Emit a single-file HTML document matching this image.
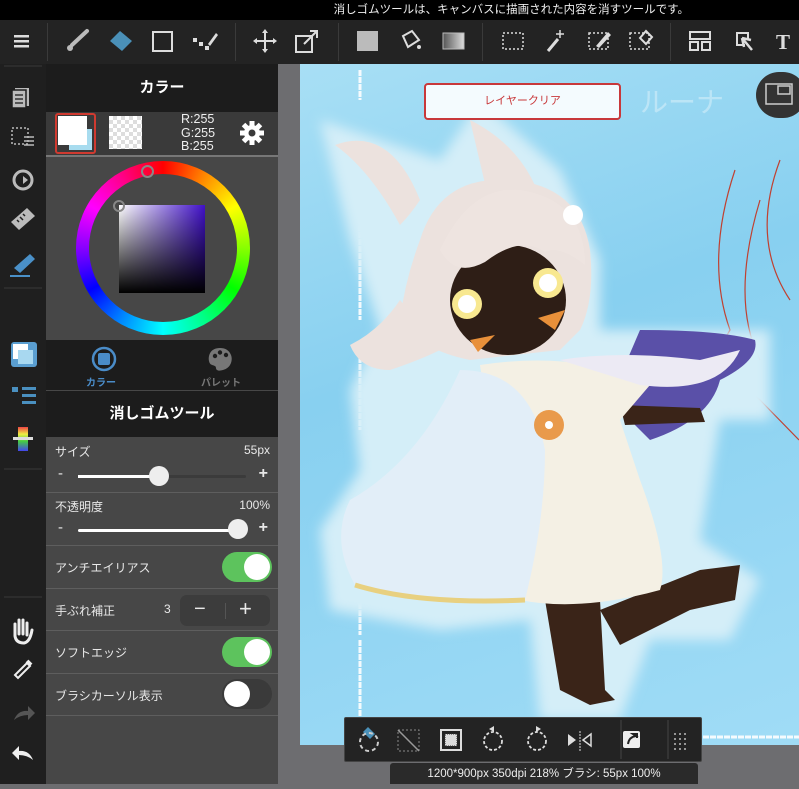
<!DOCTYPE html>
<html><head><meta charset="utf-8"><style>
*{margin:0;padding:0;box-sizing:border-box}
body{width:799px;height:784px;overflow:hidden;background:#6d6d70;font-family:"Liberation Sans","Noto Sans CJK JP",sans-serif;position:relative;color:#fff}
.abs{position:absolute}
#status{left:0;top:0;width:799px;height:20px;background:#000;font-size:11.5px;color:#eee;text-align:right;padding-right:110px;line-height:21px}
#tb{left:0;top:20px;width:799px;height:44px;background:#232323}
.sep{position:absolute;top:3px;width:1px;height:38px;background:#3a3a3a}
#rail{left:0;top:64px;width:46px;height:720px;background:#1f1f1f}
#panel{left:46px;top:64px;width:232px;height:720px;background:#474747}
.hdr{position:absolute;left:0;width:232px;background:#1c1c1c;text-align:center;font-weight:bold;font-size:15px}
.row{position:absolute;left:0;width:232px;border-top:1.5px solid #5e5e5e;font-size:12px;color:#e8e8e8}
.tog{position:absolute;right:6px;width:50px;height:30px;border-radius:15px;background:#5dc35d}
.tog::after{content:"";position:absolute;right:2px;top:2px;width:26px;height:26px;border-radius:50%;background:#fff}
.tog.off{background:#3a3a3a}.tog.off::after{left:2px;right:auto}
.track{position:absolute;left:32px;width:168px;height:3px;background:#3b3b3b;border-radius:2px}
.knob{position:absolute;width:20px;height:20px;border-radius:50%;background:#eee}
</style></head><body>
<div id="status" class="abs">消しゴムツールは、キャンバスに描画された内容を消すツールです。</div>
<div id="tb" class="abs">
<svg width="799" height="44" viewBox="0 20 799 44" style="position:absolute;left:0;top:0">
<g fill="#ddd"><rect x="14" y="35" width="15" height="2.5"/><rect x="14" y="40" width="15" height="2.5"/><rect x="14" y="45" width="15" height="2.5"/></g>
<path d="M87 31 L72 45" stroke="#bbb" stroke-width="4" stroke-linecap="round"/><circle cx="70" cy="48" r="3" fill="#bbb"/>
<path d="M120 31 L132 41 L122 51 L110 41Z" fill="#4a90b8"/>
<rect x="153" y="32" width="19" height="19" fill="none" stroke="#ddd" stroke-width="2"/>
<g fill="#ddd"><rect x="193" y="38" width="4" height="4"/><rect x="199" y="42" width="4" height="4"/><rect x="205" y="46" width="4" height="4"/><path d="M208 44 L216 33 L218 35 L210 46Z"/></g>
<path d="M265 31 V51 M255 41 H275" stroke="#ddd" stroke-width="2"/><path d="M265 29 l-3 4 h6z M265 53 l-3-4 h6z M253 41 l4-3 v6z M277 41 l-4-3 v6z" fill="#ddd"/>
<rect x="296" y="36" width="16" height="16" fill="none" stroke="#ddd" stroke-width="2"/><path d="M304 44 L317 31 M310 31 H317 V38" stroke="#ddd" stroke-width="2" fill="none"/>
<rect x="357" y="31" width="21" height="20" fill="#bbb"/>
<path d="M403 36 L412 31 L419 40 L408 47Z" fill="none" stroke="#ddd" stroke-width="2"/><circle cx="419" cy="47" r="2" fill="#ddd"/>
<defs><linearGradient id="g1"><stop offset="0" stop-color="#555"/><stop offset="1" stop-color="#ddd"/></linearGradient></defs>
<rect x="443" y="33" width="21" height="16" fill="url(#g1)" stroke="#bbb"/>
<rect x="503" y="33" width="20" height="16" fill="none" stroke="#ddd" stroke-width="1.5" stroke-dasharray="2 2"/>
<path d="M548 51 L558 39" stroke="#ddd" stroke-width="3"/><path d="M560 30 v8 M556 34 h8" stroke="#ddd" stroke-width="1.5"/>
<rect x="589" y="33" width="19" height="16" fill="none" stroke="#ddd" stroke-width="1.5" stroke-dasharray="2 2"/><path d="M596 46 L608 32 L611 35 L599 48Z" fill="#ddd"/>
<rect x="630" y="33" width="19" height="16" fill="none" stroke="#ddd" stroke-width="1.5" stroke-dasharray="2 2"/><path d="M640 38 L646 31 L652 37 L646 44Z" fill="none" stroke="#ddd" stroke-width="2"/>
<rect x="690" y="32" width="20" height="7" fill="none" stroke="#ddd" stroke-width="2"/><rect x="690" y="42" width="8" height="8" fill="none" stroke="#ddd" stroke-width="2"/><rect x="702" y="42" width="8" height="8" fill="none" stroke="#ddd" stroke-width="2"/>
<path d="M745 45 H737 V33 H748 V40" fill="none" stroke="#ddd" stroke-width="2"/><path d="M742 38 L752 50 M742 38 L751 40 M742 38 L744 47" stroke="#ddd" stroke-width="2.5"/>
<text x="776" y="49" font-family="Liberation Serif" font-weight="bold" font-size="21" fill="#ddd">T</text>
</svg>
<div class="sep" style="left:47px"></div><div class="sep" style="left:235px"></div><div class="sep" style="left:338px"></div><div class="sep" style="left:482px"></div><div class="sep" style="left:670px"></div>
</div>
<div id="rail" class="abs">
<svg width="46" height="720" viewBox="0 64 46 720">
<line x1="4" y1="66" x2="42" y2="66" stroke="#3a3a3a"/>
<rect x="15" y="88" width="14" height="18" fill="#bbb"/><rect x="12" y="90" width="14" height="18" fill="#bbb" stroke="#1f1f1f" stroke-width="1.5"/><path d="M15 95h8M15 99h8M15 103h8" stroke="#333" stroke-width="1.5"/>
<rect x="12" y="128" width="16" height="16" fill="none" stroke="#bbb" stroke-width="1.5" stroke-dasharray="2 2"/><path d="M24 137h10M24 141h10M24 145h10" stroke="#bbb" stroke-width="1.5"/>
<circle cx="23" cy="180" r="9" fill="none" stroke="#bbb" stroke-width="3"/><path d="M23 176 l5 4 -5 4z" fill="#bbb"/>
<path d="M11 222 L27 208 L35 216 L19 230Z" fill="#bbb"/><path d="M17 220 l2 2 M20 217 l3 3 M23 214 l2 2" stroke="#1f1f1f" stroke-width="1.5"/>
<path d="M14 268 L30 254 L35 259 L20 273Z" fill="#4a90c8"/><path d="M10 276 h20" stroke="#4a90c8" stroke-width="2"/>
<line x1="4" y1="288" x2="42" y2="288" stroke="#3a3a3a"/>
<rect x="11" y="342" width="26" height="25" rx="3" fill="#5a9ed0"/><rect x="13" y="344" width="15" height="15" fill="#fff"/><rect x="18" y="350" width="15" height="14" fill="#a8d8f0"/>
<g fill="#4a90c0"><rect x="12" y="387" width="6" height="5"/><rect x="22" y="387" width="14" height="3"/><rect x="22" y="394" width="14" height="3"/><rect x="22" y="401" width="14" height="3"/></g>
<defs><linearGradient id="rb" x1="0" y1="0" x2="0" y2="1"><stop offset="0" stop-color="#e44"/><stop offset=".3" stop-color="#ee4"/><stop offset=".6" stop-color="#4c4"/><stop offset="1" stop-color="#44e"/></linearGradient></defs>
<rect x="18" y="427" width="10" height="24" fill="url(#rb)"/><rect x="13" y="437" width="20" height="3" fill="#ddd"/>
<line x1="4" y1="469" x2="42" y2="469" stroke="#3a3a3a"/>
<line x1="4" y1="597" x2="42" y2="597" stroke="#3a3a3a"/>
<path d="M15 636 V624 M19 634 V620 M23 634 V620 M27 635 V623 M15 636 Q16 643 24 643 Q30 642 32 630" stroke="#eee" stroke-width="3" fill="none" stroke-linecap="round"/>
<path d="M15 675 L27 663 L30 666 L18 678Z" fill="none" stroke="#eee" stroke-width="2"/><path d="M27 661 l4 4" stroke="#eee" stroke-width="4"/>
<path d="M14 720 Q18 710 28 711 V706 L35 713 L28 720 V715 Q20 715 14 720Z" fill="#555"/>
<path d="M33 760 Q29 750 19 751 V746 L12 753 L19 760 V755 Q27 755 33 760Z" fill="#eee"/>
</svg>
</div>
<div id="panel" class="abs">
<div class="hdr" style="top:0;height:48px;line-height:48px">カラー</div>
<div class="abs" style="left:0;top:48px;width:232px;height:43px;background:#3a3a3a">
 <div class="abs" style="left:9px;top:1px;width:41px;height:41px;border:2px solid #d03a30;border-radius:3px"></div>
 <div class="abs" style="left:23px;top:17px;width:23px;height:21px;background:#a8dcef"></div>
 <div class="abs" style="left:12px;top:4px;width:29px;height:29px;background:#fff"></div>
 <div class="abs" style="left:63px;top:4px;width:33px;height:33px;background:repeating-conic-gradient(#ddd 0 25%,#fff 0 50%) 0 0/8px 8px"></div>
 <div class="abs" style="left:135px;top:1px;font-size:12.5px;line-height:13.5px;color:#eee">R:255<br>G:255<br>B:255</div>
 <svg class="abs" style="left:193px;top:8px" width="26" height="26" viewBox="0 0 26 26"><g fill="#fff" transform="translate(13 13)"><circle r="8"/><g id="t"><rect x="-2.5" y="-12" width="5" height="6"/></g><use href="#t" transform="rotate(45)"/><use href="#t" transform="rotate(90)"/><use href="#t" transform="rotate(135)"/><use href="#t" transform="rotate(180)"/><use href="#t" transform="rotate(225)"/><use href="#t" transform="rotate(270)"/><use href="#t" transform="rotate(315)"/></g><circle cx="13" cy="13" r="3.5" fill="#3a3a3a"/></svg>
</div>
<div class="abs" style="left:0;top:91px;width:232px;height:1.5px;background:#777"></div>
<div class="abs" style="left:30px;top:97px;width:174px;height:174px;border-radius:50%;background:conic-gradient(from 0deg,#0ff,#08f,#00f,#80f,#f0f,#f08,#f00,#f80,#ff0,#8f0,#0f0,#0f8,#0ff);transform:rotate(180deg)"></div>
<div class="abs" style="left:43px;top:110px;width:148px;height:148px;border-radius:50%;background:#474747"></div>
<div class="abs" style="left:73px;top:141px;width:86px;height:88px;background:linear-gradient(to bottom,transparent,#000),linear-gradient(to right,#fff,#4010c8)"></div>
<div class="abs" style="left:95px;top:101px;width:13px;height:13px;border-radius:50%;border:2px solid #888"></div>
<div class="abs" style="left:67px;top:136px;width:12px;height:12px;border-radius:50%;border:2px solid #888"></div>
<div class="abs" style="left:0;top:276px;width:232px;height:50px;background:#1c1c1c">
 <svg class="abs" style="left:45px;top:6px" width="26" height="26"><circle cx="13" cy="13" r="11" fill="none" stroke="#4a8cc8" stroke-width="2.5"/><rect x="7" y="7" width="12" height="12" rx="2" fill="#4a8cc8"/></svg>
 <div class="abs" style="left:40px;top:34px;font-size:10px;color:#4a8cc8;font-weight:bold">カラー</div>
 <svg class="abs" style="left:161px;top:6px" width="26" height="26"><path d="M13 2 C3 2 1 10 2 15 C3 21 9 18 9 22 C9 25 13 25 16 24 C24 22 26 14 24 9 C22 4 18 2 13 2Z" fill="#777"/><circle cx="8" cy="10" r="2.2" fill="#1c1c1c"/><circle cx="13" cy="6.5" r="2.2" fill="#1c1c1c"/><circle cx="19" cy="9" r="2.2" fill="#1c1c1c"/></svg>
 <div class="abs" style="left:155px;top:34px;font-size:10px;color:#777;font-weight:bold">パレット</div>
</div>
<div class="hdr" style="top:327px;height:46px;line-height:46px">消しゴムツール</div>
<div class="row" style="top:373px;height:55px;border-top:none">
 <div class="abs" style="left:9px;top:6px">サイズ</div><div class="abs" style="right:8px;top:6px">55px</div>
 <div class="abs" style="left:12px;top:28px;font-size:15px">-</div><div class="abs" style="right:10px;top:28px;font-size:16px;font-weight:bold">+</div>
 <div class="track" style="top:38px"><div class="abs" style="left:0;top:0;width:80px;height:3px;background:#fff"></div></div>
 <div class="knob" style="left:103px;top:29px"></div>
</div>
<div class="row" style="top:428px;height:53px">
 <div class="abs" style="left:9px;top:5px">不透明度</div><div class="abs" style="right:8px;top:5px">100%</div>
 <div class="abs" style="left:12px;top:26px;font-size:15px">-</div><div class="abs" style="right:10px;top:26px;font-size:16px;font-weight:bold">+</div>
 <div class="track" style="top:36px;background:#fff"></div>
 <div class="knob" style="left:182px;top:26px"></div>
</div>
<div class="row" style="top:481px;height:43px"><div class="abs" style="left:9px;top:13px">アンチエイリアス</div><div class="tog" style="top:6px"></div></div>
<div class="row" style="top:524px;height:42px"><div class="abs" style="left:9px;top:13px">手ぶれ補正</div><div class="abs" style="left:118px;top:13px">3</div>
 <div class="abs" style="left:134px;top:6px;width:90px;height:31px;border-radius:7px;background:#3c3c3c"><div class="abs" style="left:14px;top:3px;font-size:20px">−</div><div class="abs" style="left:45px;top:8px;width:1px;height:16px;background:#555"></div><div class="abs" style="left:59px;top:1px;font-size:22px">+</div></div></div>
<div class="row" style="top:566px;height:43px"><div class="abs" style="left:9px;top:13px">ソフトエッジ</div><div class="tog" style="top:6px"></div></div>
<div class="row" style="top:609px;height:42px"><div class="abs" style="left:9px;top:13px">ブラシカーソル表示</div><div class="tog off" style="top:5px"></div></div>
<div class="row" style="top:651px;height:70px"></div>
</div>
<div class="abs" style="left:278px;top:64px;width:22px;height:720px;background:#6d6d70"></div>
<div class="abs" style="left:300px;top:64px;width:499px;height:681px;background:linear-gradient(160deg,#a8dff5,#88d0f0 40%,#a0dcf6)"></div>
<svg class="abs" style="left:300px;top:64px" width="499" height="681" viewBox="300 64 499 681">
<defs><filter id="bl" x="-20%" y="-20%" width="140%" height="140%"><feGaussianBlur stdDeviation="6"/></filter></defs>
<path d="M360 70v30M360 190v130M360 350v80M361 505v40M360 575v60M360 640v100M360 737H530M640 737H799" stroke="#fff" stroke-width="3" opacity=".9" stroke-dasharray="6 1"/>
<path d="M735 170 Q705 260 730 330 Q710 360 760 400 L799 440 M760 200 Q730 300 760 360 M780 160 Q750 240 790 300" stroke="#c04030" stroke-width="1.2" fill="none"/>
<text x="640" y="112" font-size="28" fill="#fff" opacity=".35">ルーナ</text>
<g filter="url(#bl)" fill="#d4eef8">
<path d="M320 120 L440 160 L480 100 L560 170 L600 260 L600 330 L770 330 L770 420 L720 420 L700 540 L760 580 L730 640 L650 640 L620 720 L540 720 L530 620 L440 630 L330 610 L320 530 L360 470 L350 390 L380 330 L350 240Z"/>
</g>
<path d="M640 330 Q720 330 755 340 Q760 360 720 380 Q710 420 650 440 L610 400Z" fill="#5a50a8"/>
<path d="M600 610 L700 570 L740 565 L735 600 L690 610 L620 645Z" fill="#3a2418"/>
<path d="M545 600 L600 600 L605 690 L615 700 L590 705 L560 690Z" fill="#3a2418"/>
<path d="M620 405 L700 408 L705 422 L625 425Z" fill="#3a2418"/>
<path d="M480 365 Q580 350 650 385 L620 420 L640 480 Q670 560 660 590 Q580 612 520 600 Q500 500 480 365Z" fill="#f4f0e4"/>
<path d="M460 370 Q530 370 545 450 Q545 520 525 600 Q420 605 355 585 Q330 540 350 500 Q420 460 460 370Z" fill="#e2eef8"/>
<path d="M355 585 Q420 605 525 600" stroke="#e8d080" stroke-width="5" fill="none"/>
<path d="M560 360 Q620 350 700 360 L740 350 Q720 395 640 385Z" fill="#eceaf4"/>
<path d="M335 145 Q390 125 420 200 Q410 215 400 225 Q370 170 335 145Z" fill="#ece2de"/>
<path d="M470 120 Q530 150 545 215 L490 205Z" fill="#ece2de"/>
<path d="M420 240 Q440 175 510 180 Q580 185 590 250 Q595 300 580 330 L560 350 L470 360 Q420 350 400 320 Q405 280 420 240Z" fill="#ece2de"/>
<path d="M400 300 Q380 330 350 345 Q360 370 390 370 Q420 360 440 350Z" fill="#ece2de"/>
<ellipse cx="508" cy="300" rx="58" ry="55" fill="#2e1e16"/>
<path d="M440 250 Q470 185 520 190 Q585 200 585 265 Q560 245 545 252 Q520 235 485 262 Q455 278 440 250Z" fill="#eee4e0"/>
<circle cx="467" cy="304" r="15" fill="#f8e890"/><circle cx="467" cy="304" r="9" fill="#fff"/>
<circle cx="548" cy="283" r="15" fill="#f8e890"/><circle cx="548" cy="283" r="9" fill="#fff"/>
<path d="M470 340 L495 335 L478 352Z M538 318 L565 310 L555 330Z" fill="#e8903a"/>
<circle cx="573" cy="215" r="10" fill="#fff"/>
<circle cx="549" cy="425" r="15" fill="#e8903a" opacity=".9"/><circle cx="549" cy="425" r="4" fill="#fff"/>
</svg>
<div class="abs" style="left:424px;top:83px;width:197px;height:37px;border:2px solid #c8383a;border-radius:4px;background:#f4fbfe;color:#c8383a;font-size:11px;text-align:center;line-height:33px">レイヤークリア</div>
<div class="abs" style="left:756px;top:72px;width:50px;height:46px;border-radius:23px;background:#333"><svg width="30" height="24" style="position:absolute;left:9px;top:11px"><rect x="1" y="1" width="26" height="20" fill="none" stroke="#ccc" stroke-width="1.5"/><rect x="13" y="3" width="12" height="8" fill="none" stroke="#ccc" stroke-width="1.5"/></svg></div>
<div class="abs" style="left:344px;top:717px;width:358px;height:45px;background:#232323;border:1px solid #444;border-radius:2px">
<svg width="358" height="45" viewBox="344 717 358 45" style="position:absolute;left:-1px;top:-1px">
<path d="M363 732 L368 727 L375 734 L370 739Z" fill="#4a90b8"/><circle cx="369" cy="742" r="9" fill="none" stroke="#ccc" stroke-width="2" stroke-dasharray="4 3"/>
<rect x="398" y="730" width="21" height="21" fill="none" stroke="#888" stroke-dasharray="2 2"/><path d="M398 730 L419 751" stroke="#999" stroke-width="1.5"/>
<rect x="441" y="730" width="20" height="20" fill="none" stroke="#ddd" stroke-width="2"/><rect x="445" y="734" width="12" height="12" fill="#ddd" stroke="#333" stroke-dasharray="1 1"/>
<circle cx="493" cy="741" r="9" fill="none" stroke="#ddd" stroke-width="1.8" stroke-dasharray="3 2"/><path d="M489 729 l5 -3 v6z" fill="#ddd"/>
<circle cx="537" cy="741" r="9" fill="none" stroke="#ddd" stroke-width="1.8" stroke-dasharray="3 2"/><path d="M541 729 l-5 -3 v6z" fill="#ddd"/>
<path d="M568 734 v12 l8-6z" fill="#ddd"/><path d="M591 734 v12 l-8-6z" fill="none" stroke="#ddd" stroke-width="1.5"/><path d="M580 731 v20" stroke="#ddd" stroke-dasharray="2 1"/>
<line x1="621" y1="720" x2="621" y2="759" stroke="#444"/><line x1="668" y1="720" x2="668" y2="759" stroke="#444"/>
<rect x="623" y="731" width="17" height="17" rx="2" fill="#eee"/><path d="M628 744 Q629 737 636 736 l-3-2 h4 v4" stroke="#222" stroke-width="2" fill="none"/>
<g fill="#bbb"><circle cx="675" cy="734" r="1"/><circle cx="680" cy="734" r="1"/><circle cx="685" cy="734" r="1"/><circle cx="675" cy="739" r="1"/><circle cx="680" cy="739" r="1"/><circle cx="685" cy="739" r="1"/><circle cx="675" cy="744" r="1"/><circle cx="680" cy="744" r="1"/><circle cx="685" cy="744" r="1"/><circle cx="675" cy="749" r="1"/><circle cx="680" cy="749" r="1"/><circle cx="685" cy="749" r="1"/></g>
</svg></div>
<div class="abs" style="left:390px;top:763px;width:308px;height:21px;background:#2a2a2a;border-radius:3px 3px 0 0;font-size:11.5px;color:#eee;text-align:center;line-height:22px">1200*900px 350dpi 218% ブラシ: 55px 100%</div>
</body></html>
